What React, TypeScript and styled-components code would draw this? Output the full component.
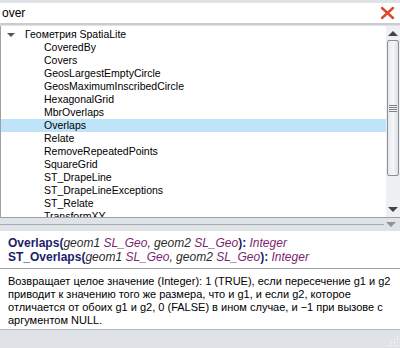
import styled, { createGlobalStyle } from "styled-components";

const GlobalStyle = createGlobalStyle`
    html, body { margin: 0; padding: 0; background: #dfe2e7; }
    body { font-family: Tahoma, "Liberation Sans", sans-serif; font-size: 11px; color: #000; }
`;

const functions = [
    "CoveredBy",
    "Covers",
    "GeosLargestEmptyCircle",
    "GeosMaximumInscribedCircle",
    "HexagonalGrid",
    "MbrOverlaps",
    "Overlaps",
    "Relate",
    "RemoveRepeatedPoints",
    "SquareGrid",
    "ST_DrapeLine",
    "ST_DrapeLineExceptions",
    "ST_Relate",
    "TransformXY",
];

const signatures = ["Overlaps", "ST_Overlaps"];

const App = () => {
    return (
        <Window>
            <GlobalStyle />
            <SearchBar>
                <SearchInput defaultValue="over" />
                <ClearButton>
                    <svg width="15" height="14" viewBox="0 0 15 14">
                        <path d="M2 2 L13 12 M13 2 L2 12" stroke="#d9482b" strokeWidth="2.4" strokeLinecap="round" />
                    </svg>
                </ClearButton>
            </SearchBar>
            <TreePanel>
                <TreeList>
                    <GroupRow>
                        <Caret />
                        Геометрия SpatiaLite
                    </GroupRow>
                    {functions.map((name) => (
                        <ItemRow key={name} $selected={name === "Overlaps"}>
                            {name}
                        </ItemRow>
                    ))}
                </TreeList>
                <ScrollBar>
                    <ArrowUp />
                    <Thumb>
                        <Grip />
                    </Thumb>
                    <Track />
                    <ArrowDown />
                </ScrollBar>
            </TreePanel>
            <Splitter>
                <SplitLine />
                <SplitArrow />
            </Splitter>
            <HelpPanel>
                {signatures.map((name) => (
                    <Signature key={name}>
                        <FnName>{name}(</FnName>
                        <Arg>geom1 </Arg>
                        <Type>SL_Geo</Type>
                        <Arg>, geom2 </Arg>
                        <Type>SL_Geo</Type>
                        <FnName>): </FnName>
                        <Type>Integer</Type>
                    </Signature>
                ))}
                <Divider />
                <Description>
                    Возвращает целое значение (Integer): 1 (TRUE), если пересечение g1 и g2 приводит к значению того же
                    размера, что и g1, и если g2, которое отличается от обоих g1 и g2, 0 (FALSE) в ином случае, и −1
                    при вызове с аргументом NULL.
                </Description>
            </HelpPanel>
            <StatusBar>
                <SizeGrip>
                    <svg width="12" height="12" viewBox="0 0 12 12">
                        {[
                            [10, 2],
                            [10, 5],
                            [7, 5],
                            [10, 8],
                            [7, 8],
                            [4, 8],
                            [10, 11],
                            [7, 11],
                            [4, 11],
                            [1, 11],
                        ].map(([x, y]) => (
                            <rect key={`${x}-${y}`} x={x} y={y - 1} width="1" height="1" fill="#fff" />
                        ))}
                    </svg>
                </SizeGrip>
            </StatusBar>
        </Window>
    );
};

const Window = styled.div`
    width: 400px;
    height: 348px;
    display: flex;
    flex-direction: column;
    background: #dfe2e7;
    padding-top: 3px;
    box-sizing: border-box;
    overflow: hidden;
`;

const SearchBar = styled.div`
    display: flex;
    align-items: center;
    height: 20px;
    background: #fff;
    border-bottom: 2px solid #c9ccd1;
`;

const SearchInput = styled.input`
    flex: 1;
    border: none;
    outline: none;
    padding: 0 2px;
    font: inherit;
    font-size: 12px;
    background: transparent;
`;

const ClearButton = styled.div`
    width: 22px;
    display: flex;
    align-items: center;
    justify-content: center;
    margin-right: 2px;
`;

const TreePanel = styled.div`
    display: flex;
    height: 191px;
    background: #fff;
    border-left: 1px solid #a0a0a0;
    border-bottom: 1px solid #a0a0a0;
    margin-top: 1px;
    overflow: hidden;
`;

const TreeList = styled.div`
    flex: 1;
    padding-top: 2px;
    font-size: 10.5px;
`;

const GroupRow = styled.div`
    display: flex;
    align-items: center;
    height: 13px;
    line-height: 13px;
    padding-left: 6px;
    gap: 8px;
`;

const Caret = styled.span`
    width: 0;
    height: 0;
    border-left: 4px solid transparent;
    border-right: 4px solid transparent;
    border-top: 4px solid #555;
    margin-right: 2px;
`;

const ItemRow = styled.div<{ $selected?: boolean }>`
    height: 13px;
    line-height: 13px;
    padding-left: 43px;
    background: ${({ $selected }) => ($selected ? "#bfe4fa" : "transparent")};
`;

const ScrollBar = styled.div`
    width: 14px;
    display: flex;
    flex-direction: column;
    align-items: center;
    background: #eef0f3;
`;

const ArrowUp = styled.div`
    margin: 5px 0 4px;
    width: 0;
    height: 0;
    border-left: 5px solid transparent;
    border-right: 5px solid transparent;
    border-bottom: 5px solid #444;
`;

const ArrowDown = styled.div`
    margin: 4px 0 5px;
    width: 0;
    height: 0;
    border-left: 5px solid transparent;
    border-right: 5px solid transparent;
    border-top: 5px solid #444;
`;

const Thumb = styled.div`
    height: 134px;
    width: 10px;
    border: 1px solid #8c8f94;
    border-radius: 2px;
    background: linear-gradient(to right, #e6e8ec, #f6f7f9 50%, #dcdfe4);
    display: flex;
    align-items: center;
    justify-content: center;
`;

const Track = styled.div`
    flex: 1;
`;

const Grip = styled.div`
    width: 8px;
    height: 7px;
    background: repeating-linear-gradient(to bottom, #7d8085 0 1px, transparent 1px 2px);
`;

const Splitter = styled.div`
    height: 13px;
    display: flex;
    align-items: center;
    padding: 0 4px 0 0;
    gap: 2px;
`;

const SplitLine = styled.div`
    flex: 1;
    height: 1px;
    background: #a6a9ae;
`;

const SplitArrow = styled.div`
    width: 0;
    height: 0;
    border-left: 5px solid transparent;
    border-right: 5px solid transparent;
    border-top: 5px solid #8f9297;
`;

const HelpPanel = styled.div`
    height: 98px;
    background: #fff;
    padding: 5px 6px 0 8px;
    box-sizing: border-box;
`;

const Signature = styled.div`
    line-height: 14px;
    font-size: 12px;
    white-space: nowrap;
`;

const FnName = styled.span`
    font-weight: bold;
    color: #1c1c6b;
`;

const Arg = styled.span`
    font-style: italic;
    color: #2a2a2a;
`;

const Type = styled.span`
    font-style: italic;
    color: #7b1f6f;
`;

const Divider = styled.div`
    height: 1px;
    background: #a0a0a0;
    margin: 4px -6px 6px -8px;
`;

const Description = styled.div`
    line-height: 13px;
    font-size: 11px;
`;

const StatusBar = styled.div`
    flex: 1;
    display: flex;
    justify-content: flex-end;
    align-items: flex-end;
    border-top: 1px solid #b5b8bd;
`;

const SizeGrip = styled.div`
    width: 12px;
    height: 12px;
    margin: 0 1px 1px 0;
`;

export default App;
